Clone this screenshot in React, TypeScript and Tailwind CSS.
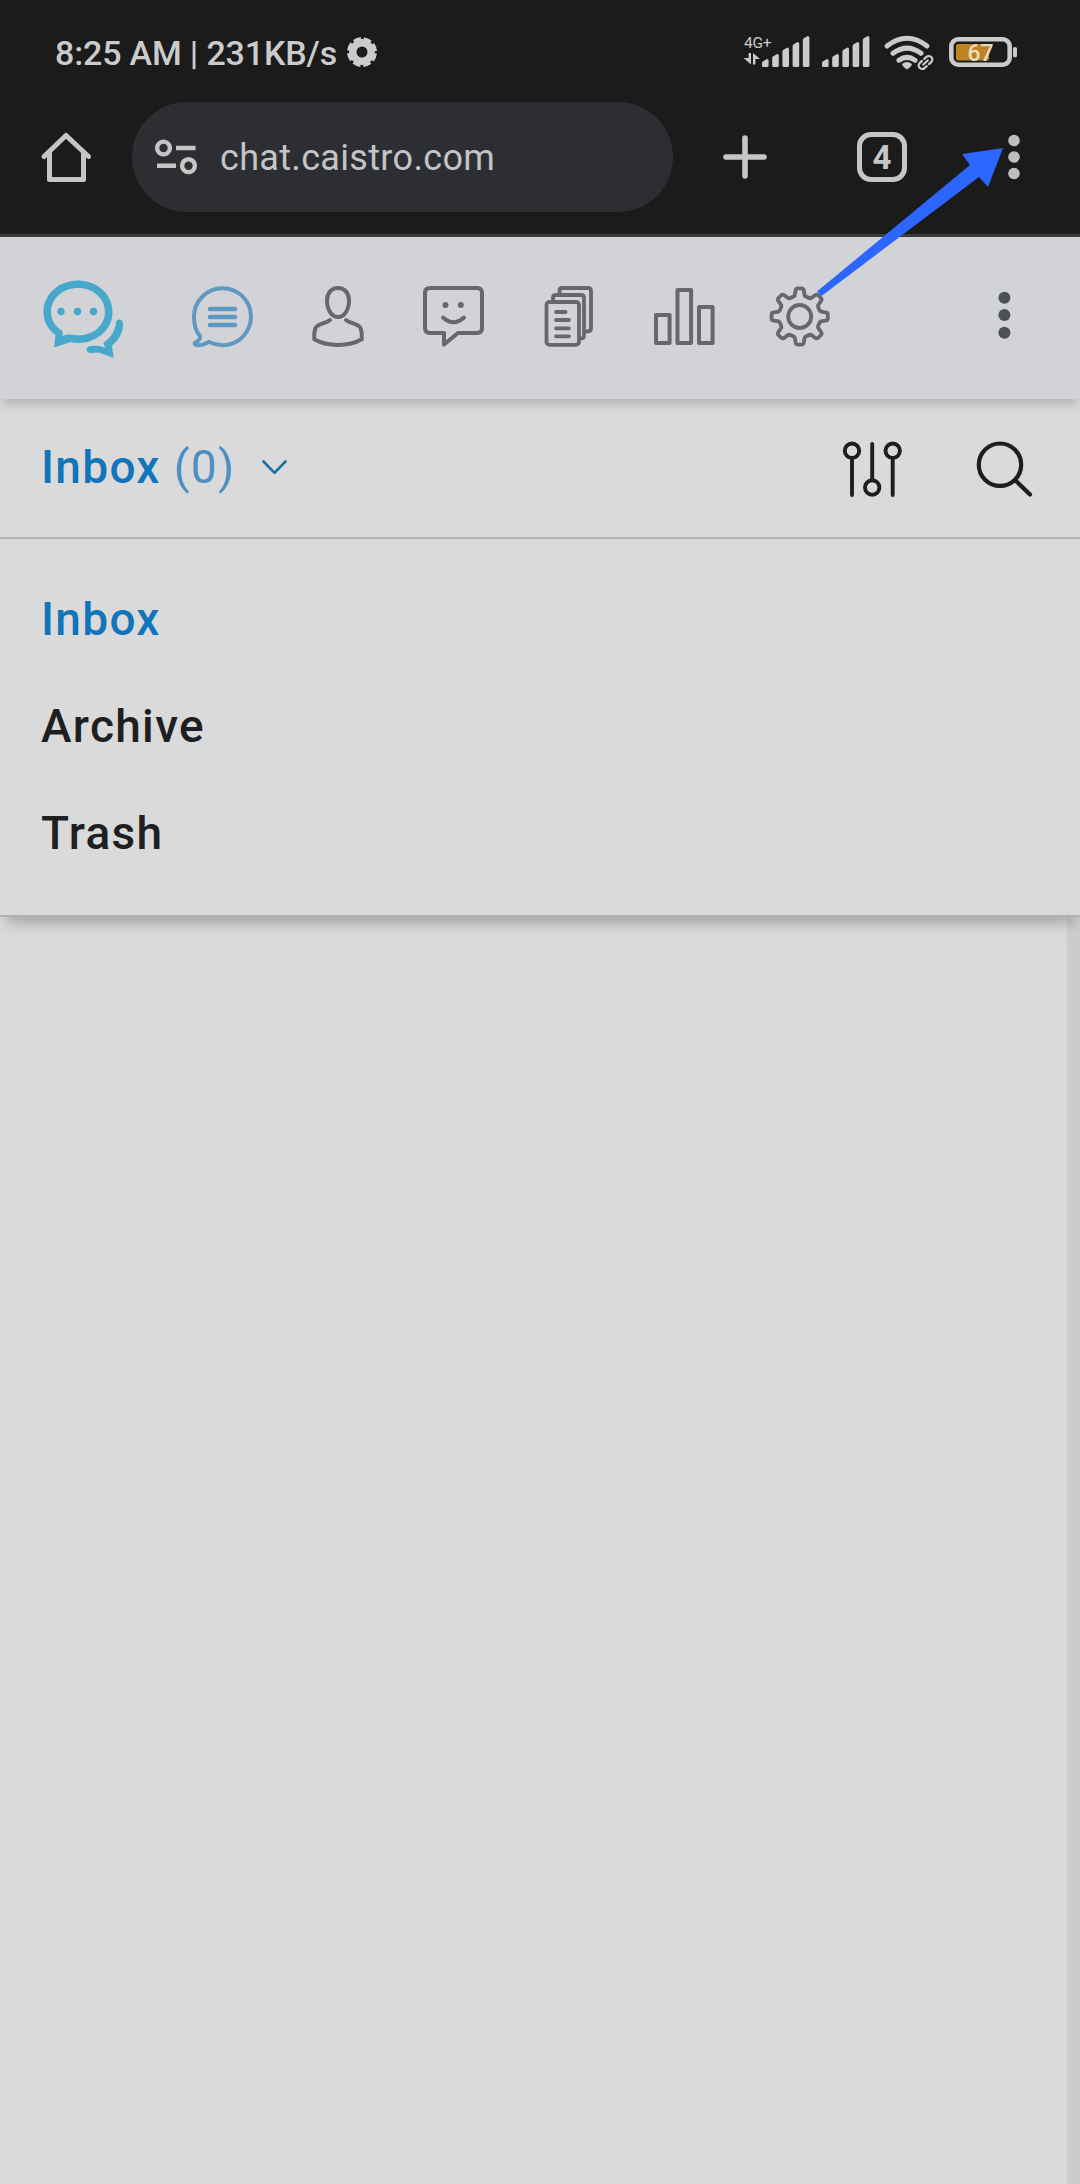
import type { ReactNode } from 'react'

interface IconProps {
  box: [number, number, number, number]
  className?: string
  stroke?: number
  children: ReactNode
}

// box is x, y, width, height; icons are drawn at one unit per pixel
function Icon({ box, className = '', stroke = 4, children }: IconProps) {
  return (
    <svg
      width={box[2]}
      height={box[3]}
      viewBox={box.join(' ')}
      fill="none"
      stroke="currentColor"
      strokeWidth={stroke}
      strokeLinecap="round"
      strokeLinejoin="round"
      className={`shrink-0 overflow-visible ${className}`}
    >
      {children}
    </svg>
  )
}

function gearPath(cx: number, cy: number, outer: number, root: number) {
  const pt = (r: number, deg: number) => {
    const a = (deg * Math.PI) / 180
    return `${(cx + r * Math.sin(a)).toFixed(2)} ${(cy - r * Math.cos(a)).toFixed(2)}`
  }
  let d = ''
  for (let i = 0; i < 8; i++) {
    const a = i * 45
    d += `${i === 0 ? 'M' : 'L'}${pt(root + 2, a - 12)} L${pt(outer - 2, a - 9)} Q${pt(outer, a - 8)} ${pt(outer, a - 4)} L${pt(outer, a + 4)} Q${pt(outer, a + 8)} ${pt(outer - 2, a + 9)} L${pt(root + 2, a + 12)} Q${pt(root + 0.3, a + 13)} ${pt(root, a + 17)} L${pt(root, a + 28)} Q${pt(root + 0.3, a + 32)} ${pt(root + 2, a + 33)} `
  }
  return d + 'Z'
}

const SIGNAL_TOPS = [60, 55, 48.5, 43, 37]

function Signal() {
  return (
    <Icon box={[762, 36, 48, 33]} stroke={0}>
      {SIGNAL_TOPS.map((top, i) => {
        const x = 762 + i * 10.2
        return (
          <path
            key={top}
            fill="currentColor"
            d={`M${x} ${top + 4} Q${x} ${top + 2.5} ${x + 1.5} ${top + 2} L${x + 5} ${top} Q${x + 6.6} ${top} ${x + 6.6} ${top + 1.5} V66.5 Q${x + 6.6} 68 ${x + 5} 68 H${x + 1.5} Q${x} 68 ${x} 66.5 Z`}
          />
        )
      })}
    </Icon>
  )
}

function StatusBar() {
  return (
    <div className="flex h-[102px] items-center pl-[55px] text-[#cbcbcb]">
      <span className="w-[282px] whitespace-nowrap pt-[3px] text-[34px] leading-[40px] font-medium tracking-[-0.16px]">
        8:25 AM | 231KB/s
      </span>
      <Icon box={[347, 36, 30, 30]} stroke={7.4} className="ml-[10px]">
        <circle cx="362" cy="52" r="9.2" />
        {/* eight teeth */}
        <circle cx="362" cy="52" r="13" strokeWidth="4" strokeLinecap="butt" strokeDasharray="7.4 2.81" strokeDashoffset="-1.4" />
      </Icon>
      <div className="ml-[367px] flex w-[18px] flex-col pb-[2px]">
        <span className="text-[15.5px] leading-[18px] tracking-[-0.3px]">4G+</span>
        <Icon box={[744, 55, 16, 14]} stroke={0}>
          <path fill="currentColor" d="M748.6 56 H751 V67.500 L743.600 61 H748.600 Z M755.400 67.500 H753 V56 L760 62 H755.400 Z" />
        </Icon>
      </div>
      <Signal />
      <div className="w-[12px]" />
      <Signal />
      <Icon box={[884, 35, 50, 33]} stroke={5} className="ml-[14px]">
        <path d="M887 46 Q907 30.5 927 46" />
        <path d="M893 53.3 Q907 43 921 53.3" />
        <path d="M899 60.2 Q907 54.6 915 60.2" />
        <path stroke="none" fill="currentColor" d="M902 64 Q907 60 912 64 Q911.500 66.500 907 69.500 Q902.500 66.500 902 64 Z" />
        <g strokeWidth="2.2" transform="rotate(-42 925.500 62.500)">
          <path stroke="#1b1b1b" strokeWidth="5" d="M919 62.500 H932" />
          <path d="M924 59 H921 a3.500 3.500 0 0 0 0 7 H924 M927 59 H930 a3.500 3.500 0 0 1 0 7 H927 M922.500 62.500 H928.500" />
        </g>
      </Icon>
      <Icon box={[949, 37, 69, 28]} stroke={4.6} className="ml-[15px]">
        <rect x="951.3" y="39.300" width="58.400" height="25.400" rx="7" />
        <rect x="956" y="44" width="33" height="16.500" rx="2" fill="#c08322" stroke="none" />
        <rect x="1013" y="47" width="4" height="10.500" rx="2" fill="currentColor" stroke="none" />
        <text x="980.500" y="61" textAnchor="middle" fontSize="23" fontWeight="500" fill="#e6dcc2" stroke="none">
          67
        </text>
      </Icon>
    </div>
  )
}

function BrowserBar() {
  return (
    <div className="flex h-[135px] items-start border-b-[3px] border-[#3b3b3b] text-[#c6c6c6]">
      <div className="flex h-[110px] items-center">
        <Icon box={[41, 132, 50, 50]} stroke={5} className="ml-[41px]">
          <path d="M44 156.500 L66 135.500 L88.500 156.500" />
          <path d="M49.500 154 V179.500 H83.500 V154" />
        </Icon>
        <div className="ml-[41px] flex h-[110px] w-[541px] items-center rounded-full bg-[#2d2e31] pl-[23px]">
          <Icon box={[155, 139, 43, 36]} stroke={4.4}>
            <circle cx="163.500" cy="148" r="6.400" />
            <circle cx="188.500" cy="165.700" r="6.400" />
            <path strokeLinecap="butt" d="M176 148 H195.500 M157 165.700 H176" />
          </Icon>
          <span className="ml-[22px] pt-[2px] text-[36px] leading-[44px] tracking-[0.33px] text-[#c3c4c7]">chat.caistro.com</span>
        </div>
        <Icon box={[723, 135, 44, 44]} stroke={5.6} className="ml-[50px]">
          <path d="M726 157 H764 M745 138 V176" />
        </Icon>
        <div className="ml-[90px] flex h-[50px] w-[50px] items-center justify-center rounded-[14px] border-[5.5px] border-[#c6c6c6] pt-[2px] text-[33px] font-bold">
          4
        </div>
        <Icon box={[1008, 134, 12, 46]} stroke={0} className="ml-[101px] text-[#bebebe]">
          <g fill="currentColor">
            <circle cx="1014" cy="140.500" r="5.800" />
            <circle cx="1014" cy="157" r="5.800" />
            <circle cx="1014" cy="173.500" r="5.800" />
          </g>
        </Icon>
      </div>
    </div>
  )
}

function AppHeader() {
  return (
    <header className="relative z-10 flex h-[162px] items-center bg-[#d2d3d7] pb-[2px] pl-[42px] text-[#66686c] shadow-[0_8px_10px_-3px_rgba(0,0,0,0.18)]">
      <Icon box={[42, 275, 84, 84]} stroke={7.4} className="text-[#46a9cb]">
        <path
          fill="currentColor"
          stroke="none"
          fillRule="evenodd"
          d="M78 280.500 C97.500 280.500 112.500 294.500 112.500 312 C112.500 329.500 97 343 78 343 Q73.500 343 70.500 342 L54 347.500 L55.500 335 C47.500 329 43.500 321 43.500 312 C43.500 294.500 58.500 280.500 78 280.500 Z M78 288 C63 288 51 298.500 51 312 C51 320 55 326.500 62.500 331 L62.500 336 Q67 334 72 334.800 C90 338 105 327 105 312 C105 298.500 93 288 78 288 Z"
        />
        <g fill="currentColor" stroke="none">
          <circle cx="61" cy="311.500" r="3.700" />
          <circle cx="77.500" cy="311.500" r="3.700" />
          <circle cx="93.500" cy="311.500" r="3.700" />
          <path d="M116 322 Q117 319.500 119.500 319.600 Q122.500 320 123 323 C123.500 332 119 340 112 345.500 L113.700 358 L99 352.500 Q95 352.500 91 353 Q87 353 86.500 349.500 Q86.500 346.500 90 346 C95 346 99 345 105 348 L103.500 342.500 C110.500 338 115.500 331 116 322 Z" />
        </g>
      </Icon>
      <nav className="ml-[64px] flex gap-[52px]">
        <Icon box={[190, 285, 64, 64]} className="text-[#5f98c0]">
          <path d="M200 336 C195.500 331 194 324 194 317 A28.500 28.500 0 1 1 222.500 345.200 C217 345.200 213 344 208.500 341.800 Q203 345.500 197.500 345.200 Q193 344.500 195.500 342.300 Q201 340 200 336 Z" />
          <path strokeWidth="4.500" d="M210 309 H235 M210 317 H235 M210 325 H235" />
        </Icon>
        <Icon box={[306, 285, 64, 64]}>
          <path d="M338 288 C345 288 349 293.500 349 300.500 C349 309.500 344.500 317 338 317 C331.500 317 327 309.500 327 300.500 C327 293.500 331 288 338 288 Z" />
          <path d="M330 320 C325.500 324 317 323.500 315.300 328.500 C314 332 314 335.500 314.300 339.300 C327 346.800 349 346.800 361.700 339.300 C362 335.500 362 332 360.700 328.500 C359 323.500 350.500 324 346 320" />
        </Icon>
        <Icon box={[422, 285, 64, 64]}>
          <path d="M430 288 H477 Q482 288 482 293 V328 Q482 333 477 333 H458 L444 344.500 V333 H430 Q425 333 425 328 V293 Q425 288 430 288 Z" />
          <path d="M443 317.500 Q453.500 327 464 317.500" />
          <g fill="currentColor" stroke="none">
            <circle cx="445.500" cy="305" r="3" />
            <circle cx="460.800" cy="305" r="3" />
          </g>
        </Icon>
        <Icon box={[538, 285, 64, 64]} stroke={3.8}>
          <rect x="546.500" y="302" width="32.500" height="42.800" rx="3" />
          <path d="M553 300 V297.500 Q553 295 556 295 H581 Q584 295 584 298 V336 Q584 338.500 581 338.500" />
          <path d="M559.500 293 V290.500 Q559.500 288 562.500 288 H588 Q591 288 591 291 V328.500 Q591 331.500 587 331.500" />
          <path d="M556 312 H565.500 M556 320 H569 M556 328.300 H569 M556 336.300 H569" />
        </Icon>
        <Icon box={[654, 285, 64, 64]}>
          <rect x="656" y="315" width="13.600" height="28" />
          <rect x="677.500" y="290" width="13.600" height="53" />
          <rect x="699" y="307" width="13.600" height="36" />
        </Icon>
        <Icon box={[770, 285, 64, 64]} stroke={3.8}>
          <path d={gearPath(799.7, 316.5, 28.2, 20.8)} />
          <circle cx="799.700" cy="316.500" r="11.500" />
        </Icon>
      </nav>
      <Icon box={[998, 285, 12, 64]} stroke={0} className="ml-[164px] text-[#4b5156]">
        <g fill="currentColor">
          <circle cx="1004.400" cy="297.700" r="6" />
          <circle cx="1004.400" cy="315" r="6" />
          <circle cx="1004.400" cy="332.700" r="6" />
        </g>
      </Icon>
    </header>
  )
}

const FOLDERS = ['Inbox', 'Archive', 'Trash']

function FolderPanel() {
  return (
    <section className="relative bg-[#dadada] shadow-[0_14px_12px_-7px_rgba(0,0,0,0.22)]">
      <div className="flex h-[140px] items-center border-b-2 border-[#b3b3b3] pl-[41px] text-[46px] leading-[54px] tracking-[1.3px]">
        <div className="flex w-[193px] gap-[13px] pb-[3px]">
          <span className="font-medium text-[#1075b9]">Inbox</span>
          <span className="text-[#4a8fc2]">(0)</span>
        </div>
        <Icon box={[262, 459, 26, 16]} stroke={2.6} className="ml-[28px] text-[#1b6fa6]">
          <path d="M263.500 460.500 L274.500 471.800 L285.500 460.500" />
        </Icon>
        <Icon box={[843, 441, 59, 55]} stroke={3.9} className="ml-[555px] text-[#1d1e20]">
          <circle cx="852" cy="450.700" r="7.200" />
          <circle cx="872.200" cy="487.500" r="7.200" />
          <circle cx="892.700" cy="450.700" r="7.200" />
          <path d="M852 458 V495 M872.200 444 V480 M892.700 458 V495" />
        </Icon>
        <Icon box={[977, 440, 56, 57]} stroke={4.2} className="ml-[75px] text-[#1d1e20]">
          <circle cx="1000" cy="464.700" r="21.200" />
          <path d="M1015.500 480.500 L1030 494.500" />
        </Icon>
      </div>
      <ul className="h-[378px] border-b-2 border-[#b1b1b1] pt-[27px] pl-[41px] text-[46px] leading-[107px] font-medium tracking-[1.3px] text-[#1e1f22]">
        {FOLDERS.map((name) => (
          <li key={name} className={name === 'Inbox' ? 'text-[#1075b9]' : ''}>
            {name}
          </li>
        ))}
      </ul>
    </section>
  )
}

export default function App() {
  return (
    <div className="relative flex h-[2184px] w-[1080px] flex-col overflow-hidden bg-[#dadada] font-[Roboto,'Noto_Sans',sans-serif]">
      <div className="bg-[#1b1b1b]">
        <StatusBar />
        <BrowserBar />
      </div>
      <AppHeader />
      <FolderPanel />
      <div className="flex flex-1 justify-end">
        <div className="w-[13px] bg-[#cccccc]" />
      </div>

      {/* Arrow pointing from the settings icon to the browser menu */}
      <svg className="absolute top-[140px] left-[810px] z-20" width="200" height="160" viewBox="810 140 200 160">
        <path fill="#2c66ff" d="M1003 148 L962 154 L970 165 L817 291.500 L821.500 296 L979 177 L988 187 Z" />
      </svg>
    </div>
  )
}
